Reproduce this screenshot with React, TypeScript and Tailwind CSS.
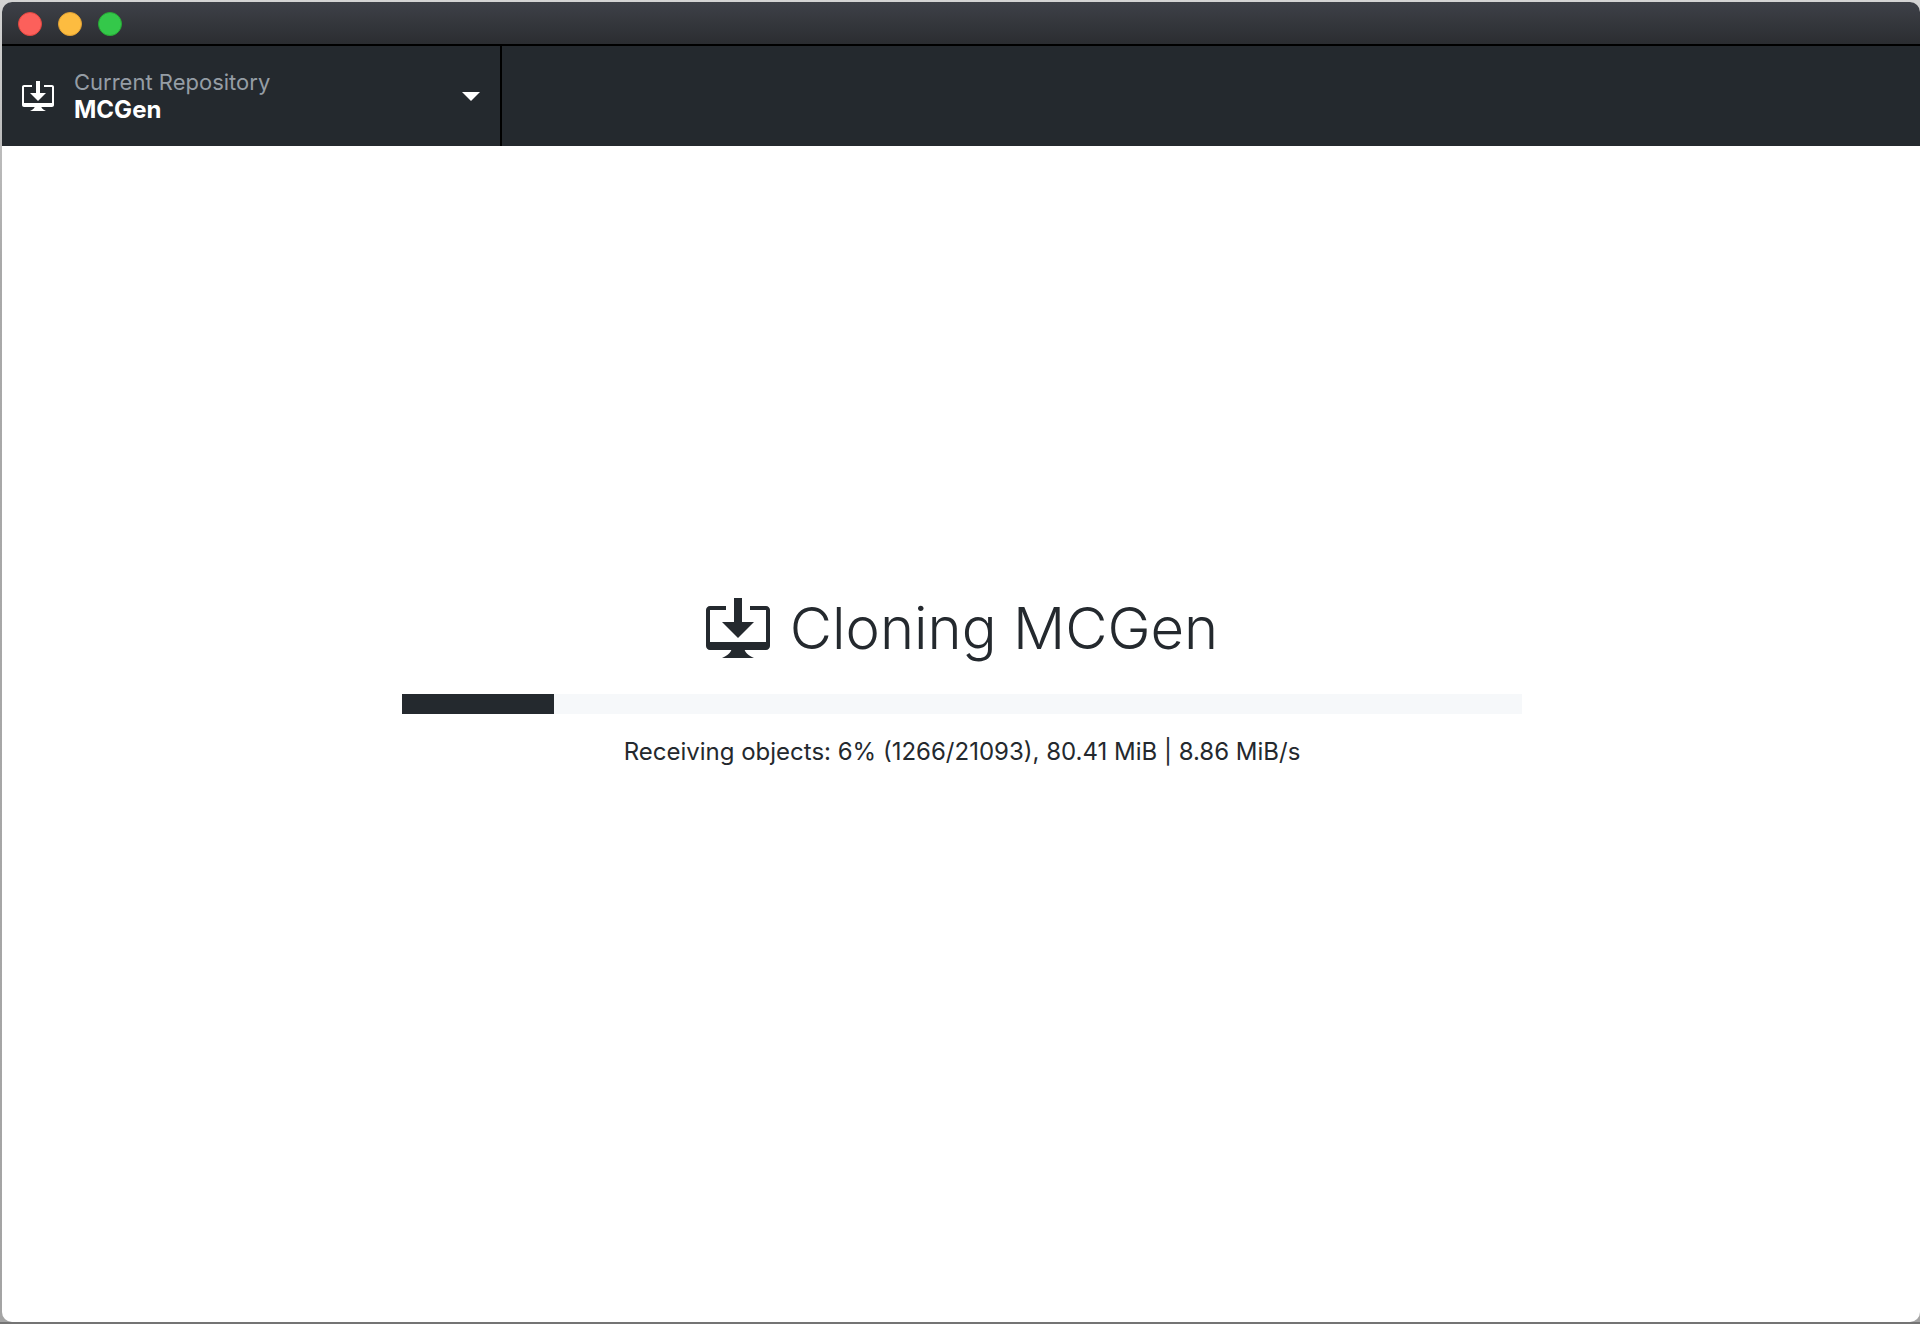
const received = 152;
const total = 1120;

function DesktopDownload({ className }: { className: string }) {
  return (
    <svg viewBox="0 0 16 15" fill="currentColor" aria-hidden="true" className={className}>
      <path d="M4 6h3V0h2v6h3l-4 4-4-4zm11-4h-4v1h4v8H1V3h4V2H1c-.55 0-1 .45-1 1v9c0 .55.45 1 1 1h5.34c-.25.61-.86 1.39-2.34 2h8c-1.48-.61-2.09-1.39-2.34-2H15c.55 0 1-.45 1-1V3c0-.55-.45-1-1-1z" />
    </svg>
  );
}

function TitleBar() {
  return (
    <header className="flex h-11 shrink-0 items-center gap-4 border-b-2 border-black bg-linear-to-b from-[#3e4148] to-[#2b2d31] px-4 pt-0.5">
      <button aria-label="Close" className="size-6 rounded-full border border-[#e2463f] bg-[#fc605b]" />
      <button aria-label="Minimize" className="size-6 rounded-full border border-[#e0a033] bg-[#fdbc40]" />
      <button aria-label="Zoom" className="size-6 rounded-full border border-[#27a934] bg-[#34c84a]" />
    </header>
  );
}

function Toolbar() {
  return (
    <nav className="flex h-25 shrink-0 bg-[#24292e]">
      <button className="flex w-125 items-center border-r-2 border-black px-5 text-left">
        <DesktopDownload className="h-[30px] w-8 text-white" />
        <span className="ml-5 flex flex-1 flex-col">
          <span className="text-[22px] leading-7 text-[#959da5]">Current Repository</span>
          <span className="text-2xl leading-7 font-bold text-white">MCGen</span>
        </span>
        <svg viewBox="0 0 18 10" fill="currentColor" aria-hidden="true" className="h-2.5 w-[18px] text-white">
          <path d="M0 1h18L9 10z" />
        </svg>
      </button>
    </nav>
  );
}

export default function App() {
  return (
    <div className="min-h-screen border-b-2 border-[#747474] bg-linear-to-b from-[#d4d4d4] via-[#a9a9a9] via-20% to-[#a4a4a4] pt-0.5 pl-0.5 font-['Inter','Liberation_Sans',sans-serif]">
      <div className="flex min-h-[calc(100vh-4px)] flex-col overflow-hidden rounded-[10px] bg-white">
        <TitleBar />
        <Toolbar />
        <main className="flex flex-1 flex-col items-center justify-center pr-8 pb-[106px] pl-[34px] text-[#24292e]">
          <h1 className="flex items-center gap-5 text-[58px] leading-[72px] font-light">
            <DesktopDownload className="h-[60px] w-16" />
            Cloning MCGen
          </h1>
          <div
            role="progressbar"
            aria-label="Cloning progress"
            aria-valuemin={0}
            aria-valuemax={total}
            aria-valuenow={received}
            className="mt-[30px] h-5 w-full max-w-280 bg-[#f6f8fa]"
          >
            <div className="h-full bg-[#24292e]" style={{ width: `${(received / total) * 100}%` }} />
          </div>
          <p className="mt-5 text-2xl leading-9">
            Receiving objects: 6% (1266/21093), 80.41 MiB | 8.86 MiB/s
          </p>
        </main>
      </div>
    </div>
  );
}
